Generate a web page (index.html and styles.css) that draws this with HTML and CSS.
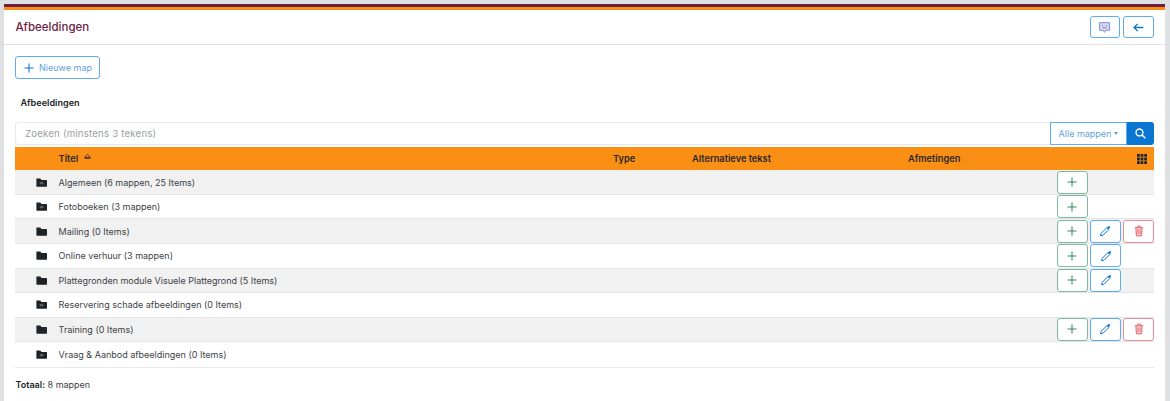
FILE: index.html
```html
<!DOCTYPE html>
<html lang="nl">
<head>
<meta charset="utf-8">
<title>Afbeeldingen</title>
<link rel="stylesheet" href="styles.css">
</head>
<body>
<svg class="defs" width="0" height="0" aria-hidden="true">
  <defs>
    <symbol id="i-plus" viewBox="0 0 16 16"><path d="M8 2v12M2 8h12" fill="none" stroke="currentColor" stroke-width="1.4"/></symbol>
    <symbol id="i-pencil" viewBox="0 0 16 16"><path d="M10.5 3.5l2.5 2.5L5.5 13.5 2 14.5l1-3.5z" fill="none" stroke="currentColor" stroke-width="1.3" stroke-linejoin="round"/><path d="M10.5 3.5l2-2a1 1 0 0 1 1.3 0l.8.8a1 1 0 0 1 0 1.3l-2 2.1z" fill="currentColor"/></symbol>
    <symbol id="i-trash" viewBox="0 0 16 16"><path d="M3.8 3.5h8.4l-.7 11h-7z" fill="#f6c9c4"/><path d="M6 2.8V1.5h4v1.3M2.5 3.5h11M3.8 3.5l.7 11h7l.7-11" fill="none" stroke="currentColor" stroke-width="1.2"/><path d="M6.3 6v6M8 6v6M9.7 6v6" stroke="currentColor" stroke-width=".7"/></symbol>
    <symbol id="i-folder" viewBox="0 0 14 11"><path d="M.5.5h5l1.5 1.7h6.2a.8.8 0 0 1 .8.8v7a.8.8 0 0 1-.8.8H1.3a.8.8 0 0 1-.8-.8z" fill="#1f2327"/></symbol>
    <symbol id="i-folder-mark" viewBox="0 0 14 11"><path d="M.5.5h5l1.5 1.7h6.2a.8.8 0 0 1 .8.8v7a.8.8 0 0 1-.8.8H1.3a.8.8 0 0 1-.8-.8z" fill="#1f2327"/><rect x="4.8" y="4.8" width="4.6" height="3" rx=".6" fill="#5c6166"/></symbol>
  </defs>
</svg>
<main class="card">
  <header class="card-head">
    <h1 class="page-title">Afbeeldingen</h1>
    <div class="head-actions">
      <button class="btn btn-blue btn-head" type="button" aria-label="Feedback">
        <svg class="ico-14" viewBox="0 0 16 16"><path d="M2 2h12v9.5H9.5L8 14l-1.5-2.5H2z" fill="#dcd8f0" stroke="#6f92dc" stroke-width="1.2" stroke-linejoin="round"/><path d="M5.5 5v1.2M10.5 5v1.2M5.5 8.4h5" stroke="#8a63b8" stroke-width="1.1" fill="none"/></svg>
      </button>
      <button class="btn btn-blue btn-head" type="button" aria-label="Terug">
        <svg class="ico-14" viewBox="0 0 16 16"><path d="M14 8H2.5M7 3.5 2.5 8 7 12.5" fill="none" stroke="currentColor" stroke-width="1.6"/></svg>
      </button>
    </div>
  </header>
  <section class="card-body">
    <button class="btn btn-blue btn-new" type="button"><svg class="ico-12"><use href="#i-plus"/></svg>Nieuwe map</button>
    <h2 class="section-title">Afbeeldingen</h2>
    <div class="search">
      <div class="search-input">Zoeken (minstens 3 tekens)</div>
      <button class="search-filter" type="button">Alle mappen<span class="caret"></span></button>
      <button class="search-go" type="button" aria-label="Zoeken">
        <svg class="ico-13" viewBox="0 0 16 16"><circle cx="6.5" cy="6.5" r="5" fill="none" stroke="currentColor" stroke-width="2"/><path d="M10.3 10.3 15 15" stroke="currentColor" stroke-width="2.2"/></svg>
      </button>
    </div>
    <div class="table">
      <div class="row row-head">
        <span></span>
        <span class="th-title">Titel<svg class="sort" viewBox="0 0 8 6"><path d="M4 .5 7.5 4.2H.5z" fill="none" stroke="currentColor" stroke-width="1"/><path d="M.5 5.5h7" stroke="currentColor" stroke-width=".8"/></svg></span>
        <span>Type</span>
        <span>Alternatieve tekst</span>
        <span>Afmetingen</span>
        <span class="th-grid"><svg class="ico-10" viewBox="0 0 10 10"><path d="M0 0h2.8v2.8H0zM3.6 0h2.8v2.8H3.6zM7.2 0H10v2.8H7.2zM0 3.6h2.8v2.8H0zM3.6 3.6h2.8v2.8H3.6zM7.2 3.6H10v2.8H7.2zM0 7.2h2.8V10H0zM3.6 7.2h2.8V10H3.6zM7.2 7.2H10V10H7.2z" fill="#212529"/></svg></span>
      </div>

      <div class="row row-alt">
        <svg class="folder"><use href="#i-folder-mark"/></svg>
        <span class="name">Algemeen (6 mappen, 25 Items)</span>
        <span></span><span></span><span></span>
        <div class="actions">
          <button class="btn btn-act btn-green" type="button" aria-label="Toevoegen"><svg class="ico-12"><use href="#i-plus"/></svg></button>
        </div>
      </div>
      <div class="row">
        <svg class="folder"><use href="#i-folder-mark"/></svg>
        <span class="name">Fotoboeken (3 mappen)</span>
        <span></span><span></span><span></span>
        <div class="actions">
          <button class="btn btn-act btn-green" type="button" aria-label="Toevoegen"><svg class="ico-12"><use href="#i-plus"/></svg></button>
        </div>
      </div>
      <div class="row row-alt">
        <svg class="folder"><use href="#i-folder"/></svg>
        <span class="name">Mailing (0 Items)</span>
        <span></span><span></span><span></span>
        <div class="actions">
          <button class="btn btn-act btn-green" type="button" aria-label="Toevoegen"><svg class="ico-12"><use href="#i-plus"/></svg></button>
          <button class="btn btn-act btn-blue" type="button" aria-label="Bewerken"><svg class="ico-12"><use href="#i-pencil"/></svg></button>
          <button class="btn btn-act btn-red" type="button" aria-label="Verwijderen"><svg class="ico-12"><use href="#i-trash"/></svg></button>
        </div>
      </div>
      <div class="row">
        <svg class="folder"><use href="#i-folder"/></svg>
        <span class="name">Online verhuur (3 mappen)</span>
        <span></span><span></span><span></span>
        <div class="actions">
          <button class="btn btn-act btn-green" type="button" aria-label="Toevoegen"><svg class="ico-12"><use href="#i-plus"/></svg></button>
          <button class="btn btn-act btn-blue" type="button" aria-label="Bewerken"><svg class="ico-12"><use href="#i-pencil"/></svg></button>
        </div>
      </div>
      <div class="row row-alt">
        <svg class="folder"><use href="#i-folder"/></svg>
        <span class="name">Plattegronden module Visuele Plattegrond (5 Items)</span>
        <span></span><span></span><span></span>
        <div class="actions">
          <button class="btn btn-act btn-green" type="button" aria-label="Toevoegen"><svg class="ico-12"><use href="#i-plus"/></svg></button>
          <button class="btn btn-act btn-blue" type="button" aria-label="Bewerken"><svg class="ico-12"><use href="#i-pencil"/></svg></button>
        </div>
      </div>
      <div class="row">
        <svg class="folder"><use href="#i-folder-mark"/></svg>
        <span class="name">Reservering schade afbeeldingen (0 Items)</span>
        <span></span><span></span><span></span>
        <div class="actions"></div>
      </div>
      <div class="row row-alt">
        <svg class="folder"><use href="#i-folder"/></svg>
        <span class="name">Training (0 Items)</span>
        <span></span><span></span><span></span>
        <div class="actions">
          <button class="btn btn-act btn-green" type="button" aria-label="Toevoegen"><svg class="ico-12"><use href="#i-plus"/></svg></button>
          <button class="btn btn-act btn-blue" type="button" aria-label="Bewerken"><svg class="ico-12"><use href="#i-pencil"/></svg></button>
          <button class="btn btn-act btn-red" type="button" aria-label="Verwijderen"><svg class="ico-12"><use href="#i-trash"/></svg></button>
        </div>
      </div>
      <div class="row">
        <svg class="folder"><use href="#i-folder-mark"/></svg>
        <span class="name">Vraag &amp; Aanbod afbeeldingen (0 Items)</span>
        <span></span><span></span><span></span>
        <div class="actions"></div>
      </div>
    </div>
    <p class="total"><strong>Totaal:</strong> 8 mappen</p>
  </section>
</main>
</body>
</html>
```
FILE: styles.css
```css
* { box-sizing: border-box; }
html, body { height: 100%; }
body {
  margin: 0;
  padding: 4px 5px 0 4px;
  background: #dfe0e2;
  font-family: Inter, "Liberation Sans", sans-serif;
  font-size: 9px;
  color: #3d4247;
  overflow: hidden;
}
.defs { position: absolute; }
.card {
  height: 397px;
  background: #fff;
  border-top: 3px solid #6d1f45;
}
.card::before {
  content: "";
  display: block;
  height: 3px;
  background: #f98f14;
}
.card-head {
  height: 35px;
  display: flex;
  align-items: center;
  justify-content: space-between;
  padding: 0 11px 0 11.5px;
  border-bottom: 1px solid #e3e4e6;
}
.page-title {
  margin: 0;
  font-size: 11.5px;
  font-weight: 500;
  color: #6d2146;
}
.head-actions { display: flex; gap: 3px; }
.btn {
  display: inline-flex;
  align-items: center;
  justify-content: center;
  background: #fff;
  border: 1px solid;
  border-radius: 3px;
  padding: 0;
  font-family: inherit;
  cursor: pointer;
}
.btn-blue { border-color: #5fabec; color: #0b76d1; }
.btn-green { border-color: #7dbb9a; color: #2f8a5c; }
.btn-red { border-color: #ea8d96; color: #de5d69; }
.btn-head { width: 30.7px; height: 22px; }
.btn-act { width: 30.75px; height: 23px; }
.btn-new {
  height: 23px;
  width: 85px;
  gap: 4px;
  font-size: 9px;
  color: #5f9fdc;
}
.btn-new svg { color: #0b76d1; }
.ico-10 { width: 10px; height: 10px; }
.ico-12 { width: 12px; height: 12px; }
.ico-13 { width: 11px; height: 11px; }
.ico-14 { width: 13px; height: 13px; }
.card-body { padding: 11px 11px 0 11px; }
.section-title {
  margin: 18px 0 0 5.5px;
  font-size: 9.1px;
  font-weight: 600;
  line-height: 12px;
  color: #212529;
}
.search {
  margin-top: 13px;
  display: flex;
  height: 23px;
}
.search-input {
  flex: 1;
  display: flex;
  align-items: center;
  padding-left: 9px;
  border: 1px solid #e8e9eb;
  border-right: 0;
  border-radius: 3px 0 0 3px;
  font-size: 9.6px;
  letter-spacing: 0.22px;
  color: #9a9ea3;
}
.search-filter {
  width: 77px;
  background: #fff;
  border: 1px solid #5fabec;
  color: #5f9fdc;
  font: inherit;
  padding: 0;
  display: flex;
  align-items: center;
  justify-content: center;
  gap: 3px;
}
.caret {
  width: 0;
  height: 0;
  border-left: 2.5px solid transparent;
  border-right: 2.5px solid transparent;
  border-top: 3px solid #5f9fdc;
}
.search-go {
  width: 27px;
  background: #0b76d1;
  border: 0;
  border-radius: 0 3px 3px 0;
  color: #fff;
  padding: 0;
  display: flex;
  align-items: center;
  justify-content: center;
}
.table { margin-top: 2px; border-bottom: 1px solid #e6e7e9; }
.row {
  display: grid;
  grid-template-columns: 43.6px 554.4px 79px 216px 149px 97px;
  align-items: center;
  height: 24.55px;
  border-bottom: 1px solid #e3e4e6;
}
.row:last-child { border-bottom: 0; }
.row-alt { background: #f1f1f1; }
.row-head {
  height: 23.4px;
  background: #f98f14;
  border-bottom: 0;
  font-size: 9.25px;
  font-weight: 600;
  color: #2b2721;
}
.th-title { display: flex; align-items: flex-start; gap: 6px; }
.sort { width: 7px; height: 5px; margin-top: 1px; }
.th-grid { display: flex; justify-content: flex-end; padding-right: 6.5px; }
.folder { width: 11px; height: 9px; margin-left: 21px; }
.name { white-space: nowrap; }
.actions { display: flex; gap: 2.6px; justify-content: flex-start; }
.total { margin: 11.5px 0 0 0.5px; }
.total strong { font-weight: 600; color: #212529; }
```
